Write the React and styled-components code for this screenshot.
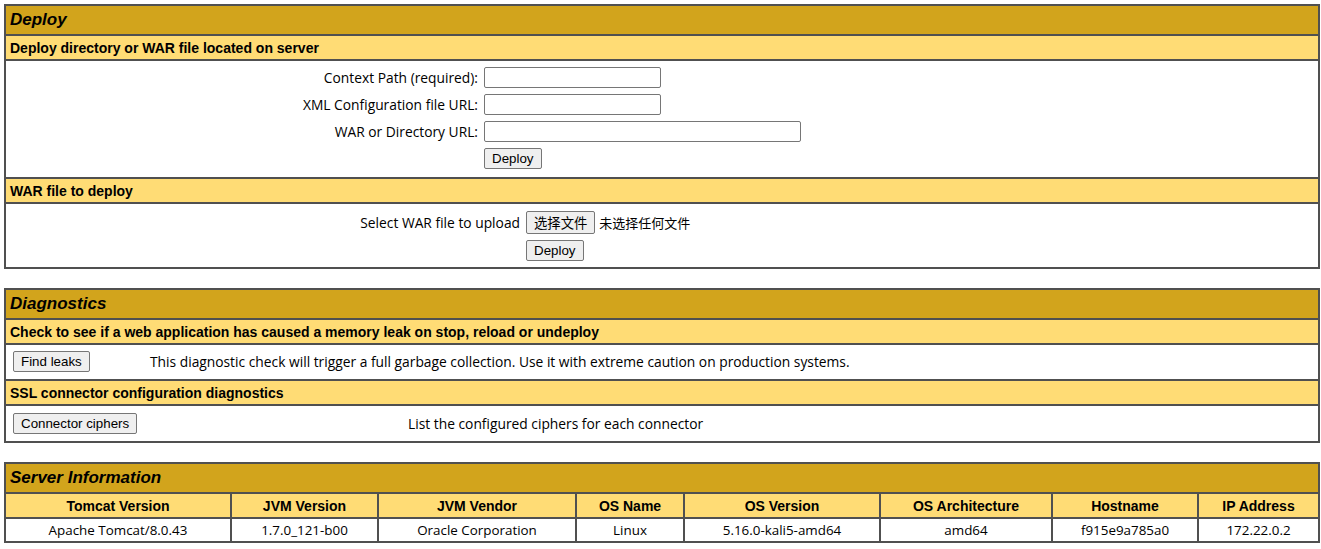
import React from "react";
import styled, { createGlobalStyle } from "styled-components";

const GlobalStyle = createGlobalStyle`
  body {
    margin: 0;
    background: #fff;
    color: #000;
    font-family: "Open Sans", "Liberation Sans", sans-serif;
    font-size: 13.8px;
  }
`;

const Page = styled.div`
  width: 1316px;
  padding: 4px 0 0 4px;
`;

const Section = styled.section`
  display: flex;
  flex-direction: column;
  gap: 2px;
  padding: 2px;
  background: #505050;
  margin-bottom: 19px;
`;

const Title = styled.div`
  height: 28px;
  display: flex;
  align-items: center;
  padding-left: 4px;
  background: #d2a41c;
  font-family: "Liberation Sans", Arial, sans-serif;
  font-size: 17px;
  font-style: italic;
  font-weight: bold;
`;

const SubHead = styled.div`
  height: 23px;
  display: flex;
  align-items: center;
  padding-left: 4px;
  background: #ffdc75;
  font-family: "Liberation Sans", Arial, sans-serif;
  font-size: 14px;
  font-weight: bold;
`;

const Body = styled.div`
  background: #fff;
`;

const FormGrid = styled.div`
  display: grid;
  grid-template-columns: ${(p) => p.$label}px auto;
  column-gap: 6px;
  row-gap: 6px;
  padding: ${(p) => p.$pad || "6px 0 8px"};
  align-items: center;
  justify-items: start;
`;

const Label = styled.label`
  justify-self: end;
`;

const Input = styled.input`
  box-sizing: border-box;
  width: ${(p) => p.$w}px;
  height: 21px;
  border: 1px solid #767676;
  border-radius: 2px;
  padding: 1px 2px;
  font: 13px "Liberation Sans", Arial, sans-serif;
`;

const Button = styled.button`
  box-sizing: border-box;
  height: ${(p) => p.$h || 21}px;
  padding: 0 7px;
  background: #efefef;
  border: 1px solid #767676;
  border-radius: 2px;
  color: #000;
  font: 13.33px "Liberation Sans", "Noto Sans CJK SC", Arial, sans-serif;
`;

const FilePick = styled.div`
  display: flex;
  align-items: center;
  gap: 4px;
  font-family: "Noto Sans CJK SC", sans-serif;
  font-size: 13px;
`;

const DiagRow = styled.div`
  display: flex;
  align-items: center;
  padding: ${(p) => p.$pad};
`;

const ButtonCell = styled.div`
  width: ${(p) => p.$w}px;
  padding-left: 7px;
  flex: none;
`;

const InfoGrid = styled.div`
  display: grid;
  grid-template-columns: 224px 145px 196px 106px 194px 170px 144px 1fr;
  gap: 2px;
`;

const HeadCell = styled.div`
  height: 23px;
  display: flex;
  align-items: center;
  justify-content: center;
  background: #ffdc75;
  font-family: "Liberation Sans", Arial, sans-serif;
  font-size: 14px;
  font-weight: bold;
`;

const DataCell = styled.div`
  height: 22px;
  display: flex;
  align-items: center;
  justify-content: center;
  background: #fff;
  font-size: 13.4px;
`;

const serverInfo = [
  ["Tomcat Version", "Apache Tomcat/8.0.43"],
  ["JVM Version", "1.7.0_121-b00"],
  ["JVM Vendor", "Oracle Corporation"],
  ["OS Name", "Linux"],
  ["OS Version", "5.16.0-kali5-amd64"],
  ["OS Architecture", "amd64"],
  ["Hostname", "f915e9a785a0"],
  ["IP Address", "172.22.0.2"],
];

export default function App() {
  return (
    <Page>
      <GlobalStyle />

      <Section>
        <Title>Deploy</Title>
        <SubHead>Deploy directory or WAR file located on server</SubHead>
        <Body>
          <FormGrid $label={472}>
            <Label>Context Path (required):</Label>
            <Input $w={177} />
            <Label>XML Configuration file URL:</Label>
            <Input $w={177} />
            <Label>WAR or Directory URL:</Label>
            <Input $w={317} />
            <span />
            <Button>Deploy</Button>
          </FormGrid>
        </Body>
        <SubHead>WAR file to deploy</SubHead>
        <Body>
          <FormGrid $label={514} $pad="7px 0 6px">
            <Label>Select WAR file to upload</Label>
            <FilePick>
              <Button $h={23}>选择文件</Button>
              <span>未选择任何文件</span>
            </FilePick>
            <span />
            <Button>Deploy</Button>
          </FormGrid>
        </Body>
      </Section>

      <Section>
        <Title>Diagnostics</Title>
        <SubHead>
          Check to see if a web application has caused a memory leak on stop, reload or undeploy
        </SubHead>
        <Body>
          <DiagRow $pad="6px 0 7px">
            <ButtonCell $w={137}>
              <Button>Find leaks</Button>
            </ButtonCell>
            <span>
              This diagnostic check will trigger a full garbage collection. Use it with extreme
              caution on production systems.
            </span>
          </DiagRow>
        </Body>
        <SubHead>SSL connector configuration diagnostics</SubHead>
        <Body>
          <DiagRow $pad="7px 0 7px">
            <ButtonCell $w={395}>
              <Button>Connector ciphers</Button>
            </ButtonCell>
            <span>List the configured ciphers for each connector</span>
          </DiagRow>
        </Body>
      </Section>

      <Section>
        <Title>Server Information</Title>
        <InfoGrid>
          {serverInfo.map(([h]) => (
            <HeadCell key={h}>{h}</HeadCell>
          ))}
          {serverInfo.map(([h, v]) => (
            <DataCell key={h}>{v}</DataCell>
          ))}
        </InfoGrid>
      </Section>
    </Page>
  );
}
